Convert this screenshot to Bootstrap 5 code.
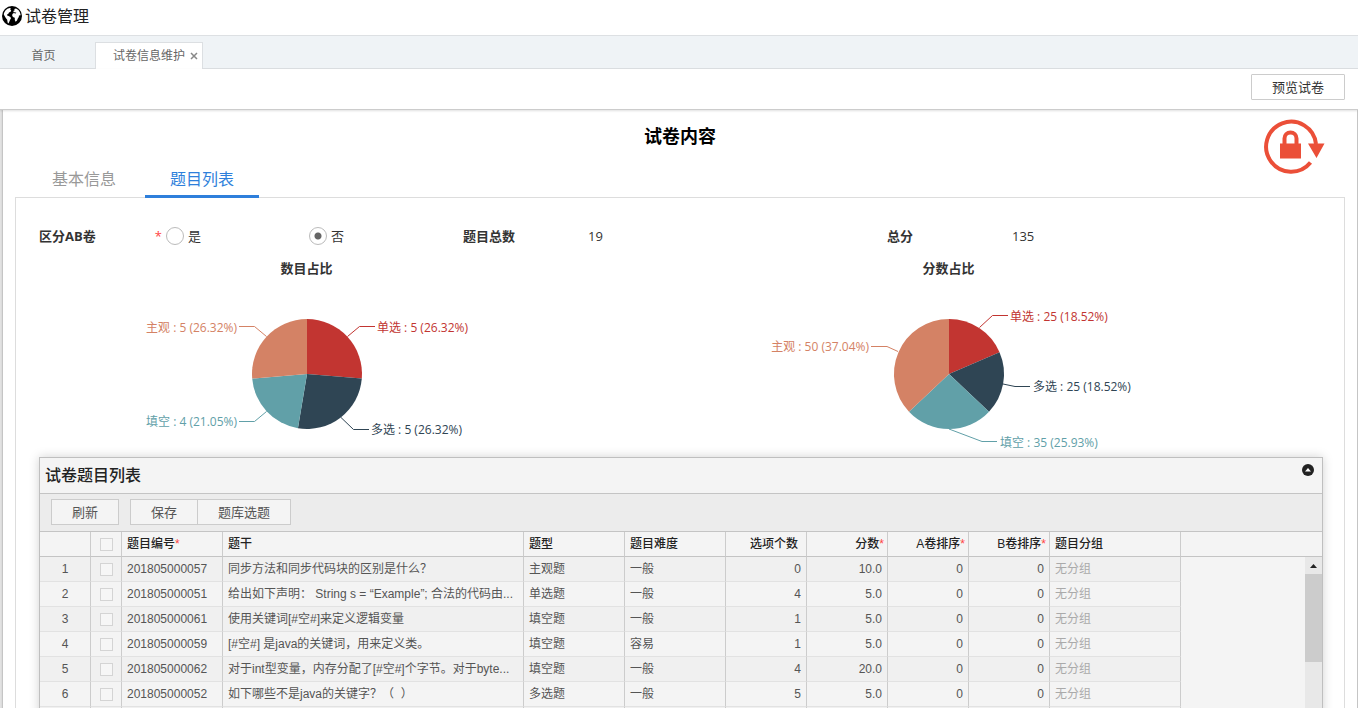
<!DOCTYPE html>
<html lang="zh-CN">
<head>
<meta charset="utf-8">
<meta name="viewport" content="width=device-width, initial-scale=1">
<title>试卷管理</title>
<link href="https://cdn.jsdelivr.net/npm/bootstrap@5.3.0/dist/css/bootstrap.min.css" rel="stylesheet">
<style>
  body { font-family: "Open Sans", "Noto Sans CJK SC", sans-serif; font-size: 13px; line-height: 20px; color: #333; background: #fff; }
  .app-head { height: 36px; border-bottom: 1px solid #dde0e3; font-size: 16px; color: #222; padding: 0 2px 4px; gap: 3px; }
  .app-head h1 { font-size: 16px; line-height: 24px; font-weight: 400; }
  .page-tabs { height: 33px; background: #eff3f6; border-bottom: 1px solid #dcdfe2; font-size: 12px; }
  .page-tabs .home-tab { width: 95px; padding-right: 8px; color: #666; height: 25px; }
  .page-tabs .open-tab { height: 27px; width: 108px; margin-bottom: -1px; background: #fff; border: 1px solid #dcdfe2; border-bottom: 0; color: #666; padding-right: 4px; gap: 5px; }
  .tab-close { background: none; border: 0; padding: 0; width: 8px; height: 8px; line-height: 0; color: #888; display: flex; }
  .tool-row { height: 41px; background: #fff; border-bottom: 1px solid #ccc; padding: 0 13px 4px; box-shadow: 0 1px 2px rgba(0,0,0,.12); position: relative; z-index: 1; }
  .flat-btn { height: 26px; line-height: 20px; padding: 2px 20px; font-size: 13px; color: #555; background: #f4f4f4; border: 1px solid #ccc; border-radius: 0; }
  .flat-btn:hover { background: #fff; border-color: #aaa; }
  .preview-btn { background: #fff; color: #333; border-radius: 1px; }
  .sheet-wrap { padding: 0 1px 0 3px; background: #e2e2e2; }
  .sheet { background: #fff; padding: 0 12px; box-shadow: 0 0 2px #888; position: relative; }
  .sheet h2 { font-size: 18px; line-height: 28px; font-weight: 700; color: #000; padding-top: 12px; padding-bottom: 12px; }
  .lock-mark { position: absolute; top: 7px; right: 31px; }
  .inner-tabs { border-bottom: 1px solid #ddd; font-size: 16px; padding-left: 12px; gap: 4px; height: 36px; }
  .inner-tabs a { color: #999; text-decoration: none; width: 114px; text-align: center; height: 36px; line-height: 34px; border-bottom: 3px solid transparent; }
  .inner-tabs a.active { color: #2e7fdb; border-bottom-color: #2e7fdb; }
  .pane { border: 1px solid #ddd; border-top: 0; padding: 28px 21px 0 23px; }
  .facts { padding-right: 12px; line-height: 20px; }
  .fact-name { width: 125px; font-weight: 700; flex: none; }
  .fact-name .req { font-weight: 400; padding-right: 2px; }
  .req { color: #f44; }
  .choices { padding: 0 11px 0 2px; }
  .choice { gap: 4px; }
  .choice input { appearance: none; width: 18px; height: 18px; margin: 0; border: 1px solid #bbb; border-radius: 50%; background: #fff; }
  .choice input:checked { background: radial-gradient(circle, #666 0 3px, #fff 4px); }
  .charts h3 { font-size: 13px; line-height: 20px; font-weight: 700; }
  .charts svg { display: block; overflow: visible; margin: 0 auto; font-size: 12px; }
  .charts polyline { fill: none; }
  .list-panel { border: 1px solid #bfbfbf; background: #f4f4f4; box-shadow: 0 0 10px rgba(0,0,0,.18); position: relative; }
  .list-title { height: 35px; padding: 0 5px; }
  .list-title h3 { font-size: 16px; line-height: 35px; color: #222; font-weight: 500; }
  .fold-btn { border: 0; background: none; padding: 6px 3px; line-height: 0; }
  .list-tools { height: 39px; background: #ececec; border-top: 1px solid #c4c4c4; border-bottom: 1px solid #c4c4c4; padding: 5px 11px; gap: 11px; }
  .grid-area { position: relative; }
  .grid-table { width: 100%; table-layout: fixed; border-collapse: separate; border-spacing: 0; font-family: "Liberation Sans", "Noto Sans CJK SC", sans-serif; font-size: 12px; line-height: 20px; color: #555; }
  .grid-table th, .grid-table td { height: 25px; padding: 0 5px; border-right: 1px solid #ccc; border-bottom: 1px solid #e2e2e2; white-space: nowrap; overflow: hidden; text-overflow: ellipsis; }
  .grid-table thead th { color: #222; font-weight: 500; border-bottom-color: #c4c4c4; }
  .grid-table .num { text-align: right; }
  .grid-table th.num { padding-right: 8px; }
  .grid-table th.need { padding-right: 3px; }
  .grid-table tbody tr:nth-child(odd) td { background: #f0f0f0; }
  .grid-table tr > :last-child { border-right: 0; }
  .grid-table tbody tr > td:last-child { border: 0; background: #f4f4f4; }
  .grid-table .mid { text-align: center; padding: 0; }
  .grid-table input { appearance: none; display: block; width: 13px; height: 13px; margin: 1px auto 0; border: 1px solid #d4d4d4; background: #f6f6f6; }
  .grid-table .none { color: #aaa; }
  .bar-track { position: absolute; top: 25px; right: 0; bottom: 0; width: 17px; background: #e8e8e8; }
  .bar-arrow { height: 17px; display: flex; align-items: center; justify-content: center; }
  .bar-thumb { height: 88px; background: #ccc; }
</style>
</head>
<body class="vh-100 overflow-hidden d-flex flex-column">
<header class="app-head d-flex align-items-center flex-shrink-0">
  <svg width="20" height="20" viewBox="0 0 20 20" aria-hidden="true"><circle cx="10" cy="10" r="10" fill="#000"/><path fill="#fff" d="M2 7 3.400 4.600 5.400 2.800 7.600 2 9 2.600 8.200 3.600 9.200 4.400 8.600 5.800 7 6.600 6.200 8 5 8.600 5.200 9.600 6.600 10 8.400 11 9 12.200 8 14 7.200 16 6.400 17.600 5.600 16.400 5.200 13.800 3.800 12 2.600 10 1.800 8.400zM12.200 3 14 2.400 16.400 4 18 6.400 18.600 9 17.800 9.800 17 9 16.800 11 15.800 12.600 15 14.600 13.600 15.800 12.800 14 12.800 11.800 11.400 11.200 10.200 10 10.400 8 11.800 7 13.600 7.400 14.400 6.800 12.800 6.200 11.400 6.200 11.600 4.800 12.800 4.200z"/></svg>
  <h1 class="m-0">试卷管理</h1>
</header>
<nav class="page-tabs d-flex align-items-end flex-shrink-0">
  <a href="#" class="home-tab d-flex align-items-center justify-content-center text-decoration-none">首页</a>
  <div class="open-tab d-flex align-items-center justify-content-end"><span>试卷信息维护</span><button type="button" class="tab-close" aria-label="关闭"><svg width="8" height="8" viewBox="0 0 8 8"><path d="M1 1l6 6M7 1l-6 6" stroke="currentColor" stroke-width="1.5"/></svg></button></div>
</nav>
<div class="tool-row d-flex align-items-center justify-content-end flex-shrink-0">
  <button type="button" class="btn flat-btn preview-btn">预览试卷</button>
</div>
<div class="sheet-wrap flex-grow-1 d-flex flex-column overflow-hidden">
<main class="sheet flex-grow-1">
  <h2 class="text-center m-0">试卷内容</h2>
  <svg class="lock-mark" width="64" height="60" viewBox="0 0 64 60" aria-hidden="true"><path d="M48.500 45.500A25 25 0 1 1 54 27" fill="none" stroke="#eb4f38" stroke-width="4"/><path d="M46 26.500h16.500L54.500 41zM18 26.500h21v15H18z" fill="#eb4f38"/><path d="M22.500 27v-5.500a6 6 0 0 1 12 0V27" fill="none" stroke="#eb4f38" stroke-width="4"/></svg>
  <nav class="inner-tabs d-flex"><a href="#">基本信息</a><a href="#" class="active">题目列表</a></nav>
  <section class="pane">
    <div class="facts row g-0">
      <div class="col-4 d-flex">
        <div class="fact-name d-flex justify-content-between"><span>区分AB卷</span><span class="req">*</span></div>
        <div class="choices row g-0 flex-grow-1">
          <label class="choice col-6 d-flex align-items-center"><input type="radio" name="ab"><span>是</span></label>
          <label class="choice col-6 d-flex align-items-center"><input type="radio" name="ab" checked><span>否</span></label>
        </div>
      </div>
      <div class="col-4 d-flex"><div class="fact-name">题目总数</div><div>19</div></div>
      <div class="col-4 d-flex"><div class="fact-name">总分</div><div>135</div></div>
    </div>
    <div class="charts row g-0 pt-2 mt-1">
      <div class="col-6"><div class="col-10">
        <h3 class="text-center m-0">数目占比</h3>
        <svg width="536" height="179" viewBox="39 278 536 179">
          <path fill="#c23531" d="M307 374V319A55 55 0 0 1 361.810 378.540z"/>
          <path fill="#2f4554" d="M307 374L361.810 378.540A55 55 0 0 1 297.950 428.250z"/>
          <path fill="#61a0a8" d="M307 374L297.950 428.250A55 55 0 0 1 252.190 378.540z"/>
          <path fill="#d48265" d="M307 374L252.190 378.540A55 55 0 0 1 307 319z"/>
          <polyline stroke="#c23531" points="347.500,336.500 359.500,326.500 375,326.500"/>
          <polyline stroke="#2f4554" points="341,417.500 353.500,429.500 369,429.500"/>
          <polyline stroke="#61a0a8" points="266.500,411.500 254.500,421.500 239,421.500"/>
          <polyline stroke="#d48265" points="266.500,336.500 254.500,326.500 239,326.500"/>
          <text x="377" y="332" fill="#c23531">单选 : 5 (26.32%)</text>
          <text x="371" y="434" fill="#2f4554">多选 : 5 (26.32%)</text>
          <text x="237" y="426" fill="#61a0a8" text-anchor="end">填空 : 4 (21.05%)</text>
          <text x="237" y="332" fill="#d48265" text-anchor="end">主观 : 5 (26.32%)</text>
        </svg>
      </div></div>
      <div class="col-6"><div class="col-10">
        <h3 class="text-center m-0">分数占比</h3>
        <svg width="536" height="179" viewBox="681 278 536 179">
          <path fill="#c23531" d="M949 374V319A55 55 0 0 1 999.500 352.220z"/>
          <path fill="#2f4554" d="M949 374L999.500 352.220A55 55 0 0 1 989.010 411.740z"/>
          <path fill="#61a0a8" d="M949 374L989.010 411.740A55 55 0 0 1 908.990 411.740z"/>
          <path fill="#d48265" d="M949 374L908.990 411.740A55 55 0 0 1 949 319z"/>
          <polyline stroke="#c23531" points="979.500,327.500 992.500,315.500 1008,315.500"/>
          <polyline stroke="#2f4554" points="1003,384 1015,386.500 1030,386.500"/>
          <polyline stroke="#61a0a8" points="949,429 982,441.500 997,441.500"/>
          <polyline stroke="#d48265" points="898,351.500 887,346.500 871,346.500"/>
          <text x="1010" y="321" fill="#c23531">单选 : 25 (18.52%)</text>
          <text x="1033" y="391" fill="#2f4554">多选 : 25 (18.52%)</text>
          <text x="1000" y="447" fill="#61a0a8">填空 : 35 (25.93%)</text>
          <text x="869" y="351" fill="#d48265" text-anchor="end">主观 : 50 (37.04%)</text>
        </svg>
      </div></div>
    </div>
    <div class="list-panel">
      <div class="list-title d-flex justify-content-between align-items-start">
        <h3 class="m-0">试卷题目列表</h3>
        <button type="button" class="fold-btn" aria-label="收起"><svg width="12" height="12" viewBox="0 0 12 12"><circle cx="6" cy="6" r="6" fill="#222"/><path d="M3 7.500 6 4l3 3.500z" fill="#fff"/></svg></button>
      </div>
      <div class="list-tools d-flex">
        <button type="button" class="btn flat-btn">刷新</button>
        <div class="btn-group"><button type="button" class="btn flat-btn">保存</button><button type="button" class="btn flat-btn">题库选题</button></div>
      </div>
      <div class="grid-area">
        <table class="grid-table">
          <colgroup><col style="width:51px"><col style="width:31px"><col style="width:101px"><col style="width:301px"><col style="width:101px"><col style="width:101px"><col style="width:81px"><col style="width:81px"><col style="width:81px"><col style="width:81px"><col style="width:131px"><col></colgroup>
          <thead><tr><th></th><th class="mid"><input type="checkbox" aria-label="全选"></th><th>题目编号<span class="req">*</span></th><th>题干</th><th>题型</th><th>题目难度</th><th class="num">选项个数</th><th class="num need">分数<span class="req">*</span></th><th class="num need">A卷排序<span class="req">*</span></th><th class="num need">B卷排序<span class="req">*</span></th><th>题目分组</th><th></th></tr></thead>
          <tbody>
            <tr><td class="mid">1</td><td class="mid"><input type="checkbox" aria-label="选择第1行"></td><td>201805000057</td><td>同步方法和同步代码块的区别是什么？</td><td>主观题</td><td>一般</td><td class="num">0</td><td class="num">10.0</td><td class="num">0</td><td class="num">0</td><td class="none">无分组</td><td></td></tr>
            <tr><td class="mid">2</td><td class="mid"><input type="checkbox" aria-label="选择第2行"></td><td>201805000051</td><td>给出如下声明： String s = “Example”; 合法的代码由...</td><td>单选题</td><td>一般</td><td class="num">4</td><td class="num">5.0</td><td class="num">0</td><td class="num">0</td><td class="none">无分组</td><td></td></tr>
            <tr><td class="mid">3</td><td class="mid"><input type="checkbox" aria-label="选择第3行"></td><td>201805000061</td><td>使用关键词[#空#]来定义逻辑变量</td><td>填空题</td><td>一般</td><td class="num">1</td><td class="num">5.0</td><td class="num">0</td><td class="num">0</td><td class="none">无分组</td><td></td></tr>
            <tr><td class="mid">4</td><td class="mid"><input type="checkbox" aria-label="选择第4行"></td><td>201805000059</td><td>[#空#] 是java的关键词，用来定义类。</td><td>填空题</td><td>容易</td><td class="num">1</td><td class="num">5.0</td><td class="num">0</td><td class="num">0</td><td class="none">无分组</td><td></td></tr>
            <tr><td class="mid">5</td><td class="mid"><input type="checkbox" aria-label="选择第5行"></td><td>201805000062</td><td>对于int型变量，内存分配了[#空#]个字节。对于byte...</td><td>填空题</td><td>一般</td><td class="num">4</td><td class="num">20.0</td><td class="num">0</td><td class="num">0</td><td class="none">无分组</td><td></td></tr>
            <tr><td class="mid">6</td><td class="mid"><input type="checkbox" aria-label="选择第6行"></td><td>201805000052</td><td>如下哪些不是java的关键字？（&nbsp; ）</td><td>多选题</td><td>一般</td><td class="num">5</td><td class="num">5.0</td><td class="num">0</td><td class="num">0</td><td class="none">无分组</td><td></td></tr>
            <tr><td></td><td></td><td></td><td></td><td></td><td></td><td></td><td></td><td></td><td></td><td></td><td></td></tr>
          </tbody>
        </table>
        <div class="bar-track"><div class="bar-arrow"><svg width="7" height="4" viewBox="0 0 7 4"><path d="M0 4 3.500 0 7 4z" fill="#222"/></svg></div><div class="bar-thumb"></div></div>
      </div>
    </div>
  </section>
</main>
</div>
<script src="https://cdn.jsdelivr.net/npm/bootstrap@5.3.0/dist/js/bootstrap.bundle.min.js"></script>
</body>
</html>
